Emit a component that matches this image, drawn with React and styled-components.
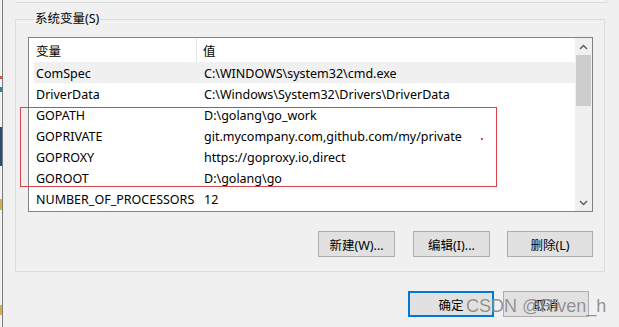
import React from "react";
import styled, { createGlobalStyle } from "styled-components";

const GlobalStyle = createGlobalStyle`
  html, body { margin: 0; padding: 0; background: #f0f0f0; }
  body { font-family: "Noto Sans", "Noto Sans CJK SC", sans-serif; font-size: 12.5px; color: #000; }
`;

const Page = styled.div`
  position: relative;
  width: 619px;
  height: 327px;
  overflow: hidden;
  display: flex;
  background: #f0f0f0;
`;

const LeftStrip = styled.div`
  width: 2px;
  flex: none;
  background: linear-gradient(
    to bottom,
    #f4f4f4 0, #f4f4f4 76px,
    #d9534f 76px, #d9534f 79px,
    #f4f4f4 79px, #f4f4f4 87px,
    #1e88a8 87px, #1e88a8 92px,
    #f4f4f4 92px, #f4f4f4 127px,
    #2c4a7a 127px, #2c4a7a 166px,
    #f4f4f4 166px, #f4f4f4 199px,
    #d8b04a 199px, #d8b04a 210px,
    #f4f4f4 210px, #f4f4f4 305px,
    #d8b04a 305px, #d8b04a 315px,
    #f4f4f4 315px
  );
  border-right: 1px solid #7a7a7a;
`;

const Dialog = styled.div`
  flex: 1;
  display: flex;
  flex-direction: column;
  padding-left: 12px;
`;

const PrevGroupEdge = styled.div`
  width: 591px;
  height: 2px;
  border-bottom: 1px solid #dcdcdc;
  border-right: 1px solid #dcdcdc;
  background: #f2f2f2;
  flex: none;
`;

const GroupBox = styled.fieldset`
  margin: 9px 0 0 0;
  width: 590px;
  height: 260px;
  box-sizing: border-box;
  border: 1px solid #dcdcdc;
  padding: 0 11px 0 12px;
  display: flex;
  flex-direction: column;
  min-width: 0;
`;

const Legend = styled.legend`
  padding: 0 1px;
  margin-left: 6px;
  font-size: 12.5px;
  line-height: 14px;
  color: #000;
`;

const ListView = styled.div`
  margin-top: 11px;
  height: 175px;
  box-sizing: border-box;
  border: 1px solid #828282;
  background: #fff;
  display: flex;
`;

const ListBody = styled.div`
  flex: 1;
  display: flex;
  flex-direction: column;
  min-width: 0;
`;

const Header = styled.div`
  height: 24px;
  display: flex;
  align-items: stretch;
  flex: none;
`;

const HeaderCell = styled.div`
  width: ${(p) => p.$w || "auto"};
  flex: ${(p) => (p.$w ? "none" : "1")};
  box-sizing: border-box;
  padding-left: ${(p) => p.$pad}px;
  padding-top: 1px;
  display: flex;
  align-items: center;
  border-right: ${(p) => (p.$divider ? "1px solid #e5e5e5" : "none")};
`;

const Row = styled.div`
  height: 21px;
  padding-top: 1px;
  box-sizing: border-box;
  display: flex;
  align-items: center;
  margin-left: 5px;
  background: ${(p) => (p.$hl ? "#f0f0f0" : "transparent")};
  white-space: nowrap;
`;

const NameCell = styled.div`
  width: 163px;
  flex: none;
  padding-left: 2px;
  box-sizing: border-box;
`;

const ValueCell = styled.div`
  flex: 1;
  padding-left: 7px;
`;

const ScrollBar = styled.div`
  width: 17px;
  flex: none;
  background: #f0f0f0;
  display: flex;
  flex-direction: column;
  align-items: center;
`;

const Arrow = styled.div`
  height: 17px;
  width: 17px;
  display: flex;
  align-items: center;
  justify-content: center;
  flex: none;
`;

const Thumb = styled.div`
  width: 15px;
  height: 51px;
  background: #cdcdcd;
  flex: none;
`;

const Track = styled.div`
  flex: 1;
`;

const ButtonRow = styled.div`
  margin-top: 19px;
  display: flex;
  justify-content: flex-end;
`;

const Button = styled.button`
  box-sizing: border-box;
  width: ${(p) => p.$w}px;
  height: 26px;
  margin-left: ${(p) => p.$ml || 0}px;
  background: #e1e1e1;
  border: ${(p) => (p.$primary ? "2px solid #0078d7" : "1px solid #adadad")};
  font-family: "Noto Sans", "Noto Sans CJK SC", sans-serif;
  font-size: 12.5px;
  color: #000;
  padding: 0;
  display: flex;
  align-items: center;
  justify-content: center;
`;

const DialogButtons = styled.div`
  margin-top: 19px;
  display: flex;
  padding-left: 393px;
`;

const Annotation = styled.div`
  position: absolute;
  left: 20px;
  top: 107px;
  width: 477px;
  height: 80px;
  border: 1px solid #d9434b;
  box-sizing: border-box;
  pointer-events: none;
`;

const Speck = styled.div`
  position: absolute;
  left: 481px;
  top: 138px;
  width: 2px;
  height: 2px;
  background: #d9434b;
`;

const Watermark = styled.div`
  position: absolute;
  left: 466px;
  top: 294px;
  font-family: "Liberation Sans", sans-serif;
  font-size: 18px;
  line-height: 24px;
  color: rgba(110, 110, 110, 0.75);
  text-shadow: 0 0 1px rgba(255, 255, 255, 0.6);
  white-space: nowrap;
  pointer-events: none;
`;

const rows = [
  ["ComSpec", "C:\\WINDOWS\\system32\\cmd.exe", true],
  ["DriverData", "C:\\Windows\\System32\\Drivers\\DriverData"],
  ["GOPATH", "D:\\golang\\go_work"],
  ["GOPRIVATE", "git.mycompany.com,github.com/my/private"],
  ["GOPROXY", "https://goproxy.io,direct"],
  ["GOROOT", "D:\\golang\\go"],
  ["NUMBER_OF_PROCESSORS", "12"],
];

const Chevron = ({ up }) => (
  <svg width="9" height="6" viewBox="0 0 9 6">
    <path
      d={up ? "M1 5 L4.5 1.5 L8 5" : "M1 1 L4.5 4.5 L8 1"}
      fill="none"
      stroke="#606060"
      strokeWidth="1.5"
    />
  </svg>
);

export default function App() {
  return (
    <>
      <GlobalStyle />
      <Page>
        <LeftStrip />
        <Dialog>
          <PrevGroupEdge />
          <GroupBox>
            <Legend>系统变量(S)</Legend>
            <ListView>
              <ListBody>
                <Header>
                  <HeaderCell $w="168px" $pad={7} $divider>变量</HeaderCell>
                  <HeaderCell $pad={6}>值</HeaderCell>
                </Header>
                {rows.map(([n, v, hl]) => (
                  <Row key={n} $hl={hl}>
                    <NameCell>{n}</NameCell>
                    <ValueCell>{v}</ValueCell>
                  </Row>
                ))}
              </ListBody>
              <ScrollBar>
                <Arrow><Chevron up /></Arrow>
                <Thumb />
                <Track />
                <Arrow><Chevron /></Arrow>
              </ScrollBar>
            </ListView>
            <ButtonRow>
              <Button $w={77}>新建(W)...</Button>
              <Button $w={77} $ml={18}>编辑(I)...</Button>
              <Button $w={86} $ml={17}>删除(L)</Button>
            </ButtonRow>
          </GroupBox>
          <DialogButtons>
            <Button $w={86} $primary>确定</Button>
            <Button $w={86} $ml={9}>取消</Button>
          </DialogButtons>
        </Dialog>
        <Annotation />
        <Speck />
        <Watermark>CSDN @Riven_h</Watermark>
      </Page>
    </>
  );
}
